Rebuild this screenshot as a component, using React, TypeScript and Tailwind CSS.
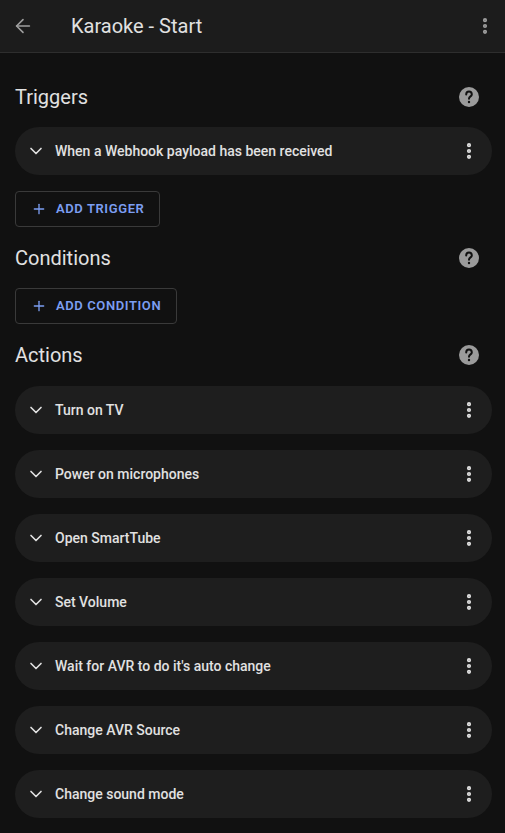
import { ArrowLeft, ChevronDown, EllipsisVertical, Plus } from "lucide-react";

const actions = [
  "Turn on TV",
  "Power on microphones",
  "Open SmartTube",
  "Set Volume",
  "Wait for AVR to do it's auto change",
  "Change AVR Source",
  "Change sound mode",
];

function HelpIcon() {
  return (
    <svg width="24" height="24" viewBox="0 0 24 24" className="text-[#9b9b9b]">
      <circle cx="12" cy="12" r="10" fill="currentColor" />
      <path
        d="M9.2 9.4a2.8 2.8 0 0 1 5.6 0c0 1.9-2.8 2.1-2.8 4.3"
        fill="none"
        stroke="#111111"
        strokeWidth="2"
        strokeLinecap="round"
      />
      <circle cx="12" cy="17" r="1.2" fill="#111111" />
    </svg>
  );
}

function SectionHeader({ title }: { title: string }) {
  return (
    <div className="flex items-center justify-between h-[40px] pr-[11px]">
      <h2 className="text-[20px] text-[#e1e1e1]">{title}</h2>
      <HelpIcon />
    </div>
  );
}

function Row({ label }: { label: string }) {
  return (
    <div className="flex items-center h-[48px] bg-[#1e1e1e] rounded-[24px] pl-[11px] pr-[13px]">
      <ChevronDown size={20} strokeWidth={2} className="text-[#e1e1e1]" />
      <span className="ml-[9px] text-[14px] font-medium text-[#e1e1e1] flex-1">
        {label}
      </span>
      <EllipsisVertical size={20} strokeWidth={3} className="text-[#e1e1e1]" />
    </div>
  );
}

function AddButton({ label }: { label: string }) {
  return (
    <button className="flex items-center h-[36px] pl-[15px] pr-[15px] border border-[#3a3a3a] rounded-[4px] text-[#7c9ef2] self-start">
      <Plus size={16} strokeWidth={2} />
      <span className="ml-[9px] text-[13px] font-semibold tracking-[0.6px]">{label}</span>
    </button>
  );
}

export default function App() {
  return (
    <div
      className="w-[505px] h-[833px] bg-[#111111] overflow-hidden"
      style={{ fontFamily: "Roboto, 'Liberation Sans', sans-serif" }}
    >
      <header className="flex items-center h-[53px] bg-[#1c1c1c] border-b border-[#2e2e2e] pl-[12px] pr-[10px]">
        <ArrowLeft size={22} strokeWidth={1.75} className="text-[#9e9e9e]" />
        <h1 className="ml-[37px] text-[20px] text-[#e1e1e1] flex-1">Karaoke - Start</h1>
        <EllipsisVertical size={20} strokeWidth={3} className="text-[#9e9e9e]" />
      </header>

      <main className="flex flex-col pl-[15px] pr-[13px] pt-[24px]">
        <SectionHeader title="Triggers" />
        <div className="flex flex-col gap-[16px] mt-[10px]">
          <Row label="When a Webhook payload has been received" />
          <AddButton label="ADD TRIGGER" />
        </div>

        <div className="mt-[11px]">
          <SectionHeader title="Conditions" />
        </div>
        <div className="flex flex-col mt-[10px]">
          <AddButton label="ADD CONDITION" />
        </div>

        <div className="mt-[11px]">
          <SectionHeader title="Actions" />
        </div>
        <div className="flex flex-col gap-[16px] mt-[11px]">
          {actions.map((a) => (
            <Row key={a} label={a} />
          ))}
        </div>
      </main>
    </div>
  );
}
